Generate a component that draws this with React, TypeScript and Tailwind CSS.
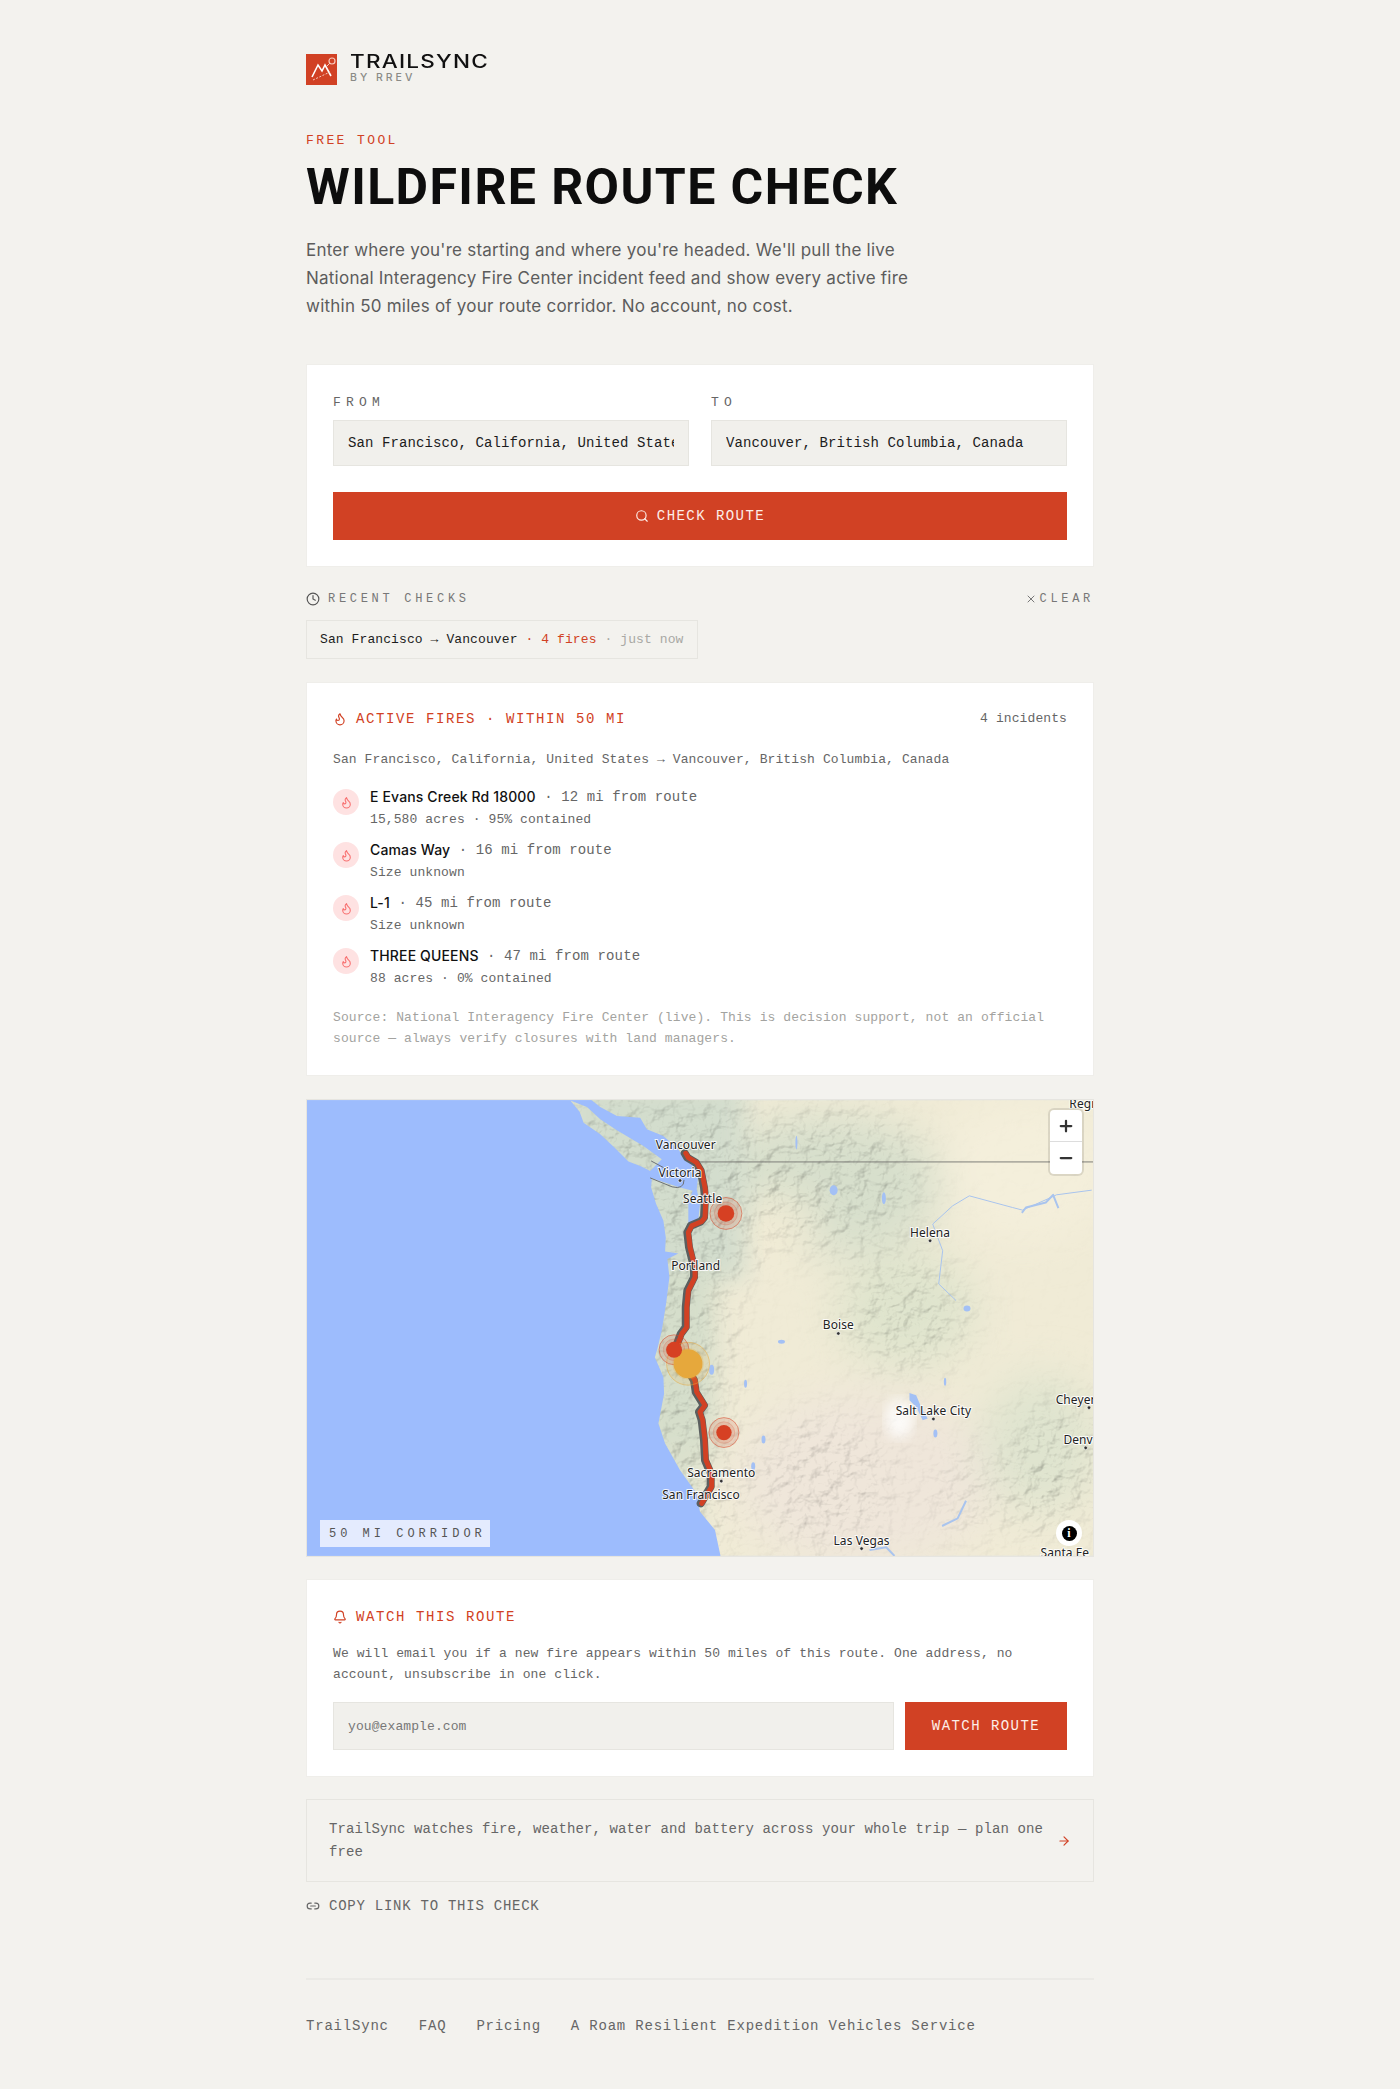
import { ArrowRight, Bell, Clock, Flame, Link2, Minus, Plus, Search, X } from "lucide-react";

const mono = "font-['Liberation_Mono',monospace] tracking-[0.1px]";
const z = (pts: number[][]) => pts.map(([x, y], i) => `${i ? "L" : "M"}${(x / 3 - 6).toFixed(1)} ${(y / 3 - 9).toFixed(1)}`).join(" ");
const zq = (x: number) => x / 3 + 294;
const zy = (y: number) => y / 3 - 9;
const z4 = (pts: number[][]) => pts.map(([x, y], i) => `${i ? "L" : "M"}${zq(x).toFixed(1)} ${zy(y).toFixed(1)}`).join(" ");

const mainland = [
  [865, 20], [900, 48], [950, 75], [1020, 80], [1040, 115], [1090, 135], [1130, 170], [1150, 195], [1175, 215], [1195, 250], [1190, 295], [1200, 340], [1195, 385], [1165, 400], [1165, 335], [1178, 300], [1140, 290], [1055, 262], [1053, 290], [1068, 340], [1090, 390], [1097, 440], [1095, 482], [1135, 488], [1102, 505], [1108, 560], [1098, 640], [1085, 720], [1072, 775], [1064, 800], [1090, 860], [1092, 910], [1075, 1000], [1095, 1060], [1140, 1140], [1190, 1210], [1200, 1265], [1245, 1320], [1262, 1400], [2700, 1400], [2700, 20],
];
const island = [[810, 28], [860, 48], [900, 85], [950, 118], [1030, 165], [1085, 205], [1050, 240], [1022, 226], [985, 212], [945, 172], [900, 130], [850, 95], [838, 62]];
const route = [[1157, 187], [1165, 200], [1190, 215], [1205, 240], [1215, 290], [1218, 320], [1215, 380], [1205, 392], [1175, 405], [1165, 425], [1170, 470], [1185, 530], [1185, 560], [1165, 600], [1160, 650], [1160, 710], [1145, 730], [1130, 770], [1150, 810], [1185, 870], [1190, 905], [1215, 945], [1200, 965], [1208, 990], [1215, 1050], [1218, 1110], [1235, 1150], [1235, 1190], [1205, 1240]];
const labels: [string, number, number][] = [
  ["Vancouver", 257, 161], ["Victoria", 240, 245], ["Seattle", 308, 326], ["Portland", 287, 527], ["Helena", 992, 426], ["Boise", 716, 705], ["Salt Lake City", 1002, 962], ["Cheyenne", 1455, 928], ["Denver", 1455, 1050], ["Sacramento", 364, 1149], ["San Francisco", 303, 1216], ["Las Vegas", 786, 1352], ["Santa Fe", 1397, 1390], ["Regina", 1470, 40],
];
const dots = [[240, 269], [992, 450], [716, 729], [1002, 986], [1470, 952], [1460, 1073], [364, 1173], [786, 1376]];
const lakes = [[702, 298, 4, 5], [853, 322, 2, 6], [1103, 654, 3.5, 3], [545, 754, 3.5, 2], [437, 880, 1.5, 4], [491, 1048, 2, 4], [460, 1128, 2, 4], [1008, 1030, 2, 4], [1037, 874, 1.2, 4], [335, 838, 2.5, 5], [590, 155, 1, 7]];

function RouteMap() {
  return (
    <svg viewBox="0 0 788 457" className="block w-full h-full">
      <defs>
        <clipPath id="land"><path d={z(mainland) + "Z " + z(island) + "Z"} /></clipPath>
        <filter id="relief" x="0" y="0" width="100%" height="100%">
          <feTurbulence type="fractalNoise" baseFrequency="0.07 0.08" numOctaves="5" seed="11" />
          <feDiffuseLighting surfaceScale="6" diffuseConstant="1.15" lightingColor="#fff"><feDistantLight azimuth="225" elevation="62" /></feDiffuseLighting>
        </filter>
        <filter id="b30"><feGaussianBlur stdDeviation="22" /></filter>
        <filter id="b14"><feGaussianBlur stdDeviation="12" /></filter>
        <filter id="b6"><feGaussianBlur stdDeviation="6" /></filter>
        <mask id="reliefMask" maskUnits="userSpaceOnUse" x="0" y="0" width="788" height="457">
          <rect width="788" height="457" fill="#0c0c0c" />
          <g filter="url(#b30)" fill="#fff">
            <rect x="260" y="0" width="190" height="170" />
            <rect x="340" y="170" width="85" height="287" />
            <ellipse cx="530" cy="80" rx="90" ry="70" />
            <ellipse cx="600" cy="215" rx="60" ry="55" />
            <ellipse cx="520" cy="385" rx="70" ry="70" fillOpacity="0.8" />
            <ellipse cx="660" cy="395" rx="40" ry="50" fillOpacity="0.6" />
            <ellipse cx="750" cy="370" rx="50" ry="70" />
          </g>
        </mask>
      </defs>
      <rect width="788" height="457" fill="#9dbcfd" />
      <g clipPath="url(#land)">
        <rect width="788" height="457" fill="#f0ebd6" />
        <g filter="url(#b30)">
          <ellipse cx="560" cy="380" rx="130" ry="90" fill="#efe6da" />
          <ellipse cx="520" cy="85" rx="120" ry="70" fill="#d7dfcc" />
          <ellipse cx="600" cy="210" rx="70" ry="60" fill="#dfe4cd" />
          <ellipse cx="735" cy="345" rx="60" ry="70" fill="#dfe4cf" />
          <ellipse cx="465" cy="125" rx="45" ry="30" fill="#f2ecd6" />
          <ellipse cx="720" cy="70" rx="90" ry="70" fill="#f4efdb" />
        </g>
        <g filter="url(#b14)">
          <rect x="260" y="-20" width="180" height="200" fill="#d3ddcd" />
          <rect x="335" y="170" width="75" height="190" fill="#d5decb" />
          <rect x="345" y="340" width="50" height="100" fill="#dbe1cd" />
        </g>
        <ellipse cx={zq(900)} cy={zy(985)} rx="14" ry="20" fill="#fff" opacity="0.8" filter="url(#b6)" />
        <rect width="788" height="457" filter="url(#relief)" mask="url(#reliefMask)" className="mix-blend-multiply" opacity="0.4" />
      </g>
      <g fill="#a3c0f5">
        {lakes.map(([x, y, a, b], i) => <ellipse key={i} cx={zq(x)} cy={zy(y)} rx={a} ry={b} />)}
        <path d={z4([[930, 908], [950, 915], [965, 950], [985, 985], [970, 990], [950, 950], [930, 930]]) + "Z"} />
      </g>
      <g fill="none" stroke="#a9c4ee" strokeLinejoin="round">
        <path d={z4([[1478, 298], [1372, 312], [1360, 318], [1270, 358], [1240, 350], [1110, 315], [1060, 345], [1000, 400], [1030, 480], [1018, 580], [1070, 630]])} strokeWidth="1" />
        <path d={z4([[1268, 366], [1280, 350], [1340, 335], [1362, 312], [1378, 352]])} strokeWidth="2" />
        <path d={z4([[1100, 1232], [1075, 1285], [1028, 1308]])} strokeWidth="2" />
        <path d={z4([[810, 1380], [860, 1372], [885, 1398]])} strokeWidth="2" />
      </g>
      <path d="M391 62 H788" stroke="#7d7d78" strokeWidth="1" fill="none" />
      <path d="M344 78 L366 87 Q378 90 378 80 M345 61 L358 68" stroke="#6b6f74" strokeWidth="1" fill="none" />
      <path d={z(route)} transform="translate(-1 0)" fill="none" stroke="#5b5f5f" strokeWidth="8" strokeLinejoin="round" strokeLinecap="round" />
      <path d={z(route)} fill="none" stroke="#d14124" strokeWidth="5" strokeLinejoin="round" strokeLinecap="round" />
      <g>
        {[[264, 820, "#e9a93c", 21.5], [222, 778, "#d64023", 15], [378, 368, "#d64023", 16], [372, 1027, "#d64023", 15]].map(([x, y, c, r], i) => (
          <g key={i} fill={c as string} stroke={c as string}>
            <circle cx={zq(x as number)} cy={zy(y as number)} r={r as number} fillOpacity="0.14" strokeOpacity="0.5" strokeWidth="1" />
            <circle cx={zq(x as number)} cy={zy(y as number)} r={(r as number) * 0.72} fillOpacity="0.12" strokeOpacity="0.18" strokeWidth="1" />
          </g>
        ))}
        <circle cx={zq(264)} cy={zy(820)} r="14.5" fill="#e6a83c" />
        <circle cx={zq(222)} cy={zy(778)} r="8" fill="#d64023" />
        <circle cx={zq(378)} cy={zy(368)} r="8.3" fill="#d64023" />
        <circle cx={zq(372)} cy={zy(1027)} r="7.7" fill="#d64023" />
      </g>
      <g fill="#333">
        {dots.map(([x, y], i) => <circle key={i} cx={zq(x)} cy={zy(y)} r="1.8" stroke="#fff" strokeWidth="0.6" />)}
      </g>
      <g fontFamily="'Noto Sans', sans-serif" fontSize="12" fill="#222" textAnchor="middle" stroke="#fff" strokeWidth="2" strokeOpacity="0.85" paintOrder="stroke">
        {labels.map(([t, x, y]) => <text key={t} x={zq(x)} y={zy(y) + 4}>{t}</text>)}
      </g>
    </svg>
  );
}

function Row({ name, dist, meta }: { name: string; dist: string; meta: string }) {
  return (
    <div className="flex gap-[11px] h-[53px]">
      <div className="mt-[3px] w-[26px] h-[26px] rounded-full bg-[#fee2e2] flex items-center justify-center shrink-0">
        <Flame size={13} className="text-[#f87171]" />
      </div>
      <div>
        <div className="h-[22px] leading-[22px] flex items-center">
          <span className="font-['Inter',sans-serif] text-[14px] font-medium tracking-[0.14px] text-[#111]">{name}</span>
          <span className={`${mono} text-[14px] text-[#666] whitespace-pre`}> · {dist} mi from route</span>
        </div>
        <div className={`${mono} text-[13px] leading-[24px] text-[#666]`}>{meta}</div>
      </div>
    </div>
  );
}

export default function App() {
  return (
    <div className={`min-h-[2089px] bg-[#f3f2ee] ${mono}`}>
      <div className="mx-auto w-[788px] pt-[54px]">
        <header className="flex items-start gap-[13px] h-[32px]">
          <svg width="31" height="31" viewBox="0 0 31 31" className="shrink-0">
            <rect width="31" height="31" fill="#d14124" />
            <path d="M6 23 L12 11 L16 17 L19 11 L25 22" fill="none" stroke="#fff" strokeWidth="1.6" />
            <path d="M7 26 L24 18" stroke="#f6c8bb" strokeWidth="1" strokeDasharray="2 1.5" />
            <circle cx="26" cy="7" r="3" fill="none" stroke="#f6c8bb" strokeWidth="1.2" />
            <path d="M21 12 L24 9" stroke="#f6c8bb" strokeWidth="1" />
          </svg>
          <div>
            <div className="font-['Inter',sans-serif] font-medium text-[18px] leading-[15px] tracking-[1px] text-[#111] mt-[-1px] pt-[1px] origin-left scale-x-[1.25] whitespace-nowrap">TRAILSYNC</div>
            <div className="font-['Inter',sans-serif] font-medium text-[10.5px] leading-[11px] tracking-[3px] text-[#8a8a86] mt-[3px]">BY RREV</div>
          </div>
        </header>

        <p className="mt-[47px] text-[13px] leading-[16px] tracking-[2.4px] text-[#d14124]">FREE TOOL</p>
        <h1 className="mt-[9px] font-['Roboto',sans-serif] font-bold text-[50px] leading-[58px] tracking-[1.4px] text-[#0d0d0d] whitespace-nowrap">WILDFIRE ROUTE CHECK</h1>
        <p className="mt-[20px] font-['Inter',sans-serif] text-[17px] leading-[28px] tracking-[0.23px] text-[#5c5c5c] w-[620px]">
          Enter where you're starting and where you're headed. We'll pull the live National Interagency Fire Center incident feed and show every active fire within 50 miles of your route corridor. No account, no cost.
        </p>

        <section className="mt-[44px] h-[203px] bg-white border border-[#efeeea] px-[26px] pt-[29px]">
          <div className="grid grid-cols-2 gap-[22px]">
            <label className="block">
              <span className="block text-[13px] leading-[18px] tracking-[5.2px] text-[#666]">FROM</span>
              <input readOnly value="San Francisco, California, United States" className={`${mono} mt-[8px] w-full h-[46px] bg-[#f1f0ec] border border-[#e6e5e0] px-[14px] text-[14px] text-[#1c1c1c] outline-none`} />
            </label>
            <label className="block">
              <span className="block text-[13px] leading-[18px] tracking-[5.2px] text-[#666]">TO</span>
              <input readOnly value="Vancouver, British Columbia, Canada" className={`${mono} mt-[8px] w-full h-[46px] bg-[#f1f0ec] border border-[#e6e5e0] px-[14px] text-[14px] text-[#1c1c1c] outline-none`} />
            </label>
          </div>
          <button className="mt-[26px] w-full h-[48px] bg-[#d14124] text-[14px] tracking-[1.45px] text-[#fdeee9] flex items-center justify-center gap-[8px]">
            <Search size={14} /> CHECK ROUTE
          </button>
        </section>

        <div className="mt-[24px] h-[16px] flex items-center justify-between text-[12px] tracking-[3.7px] text-[#777]">
          <span className="flex items-center gap-[8px]"><Clock size={14} className="text-[#555]" />RECENT CHECKS</span>
          <span className="flex items-center gap-[2px]"><X size={12} />CLEAR</span>
        </div>
        <div className="mt-[13px] w-[392px] h-[39px] border border-[#e6e5e0] flex items-center px-[13px] text-[13px] whitespace-pre">
          <span className="text-[#1c1c1c]">San Francisco → Vancouver</span>
          <span className="text-[#d14124]"> · 4 fires</span>
          <span className="text-[#a8a8a4]"> · just now</span>
        </div>

        <section className="mt-[23px] h-[394px] bg-white border border-[#efeeea] px-[26px] pt-[27px]">
          <div className="flex items-center justify-between h-[18px]">
            <span className="flex items-center gap-[9px] text-[14px] tracking-[1.6px] text-[#d14124]"><Flame size={14} />ACTIVE FIRES · WITHIN 50 MI</span>
            <span className="text-[13px] text-[#666]">4 incidents</span>
          </div>
          <p className="mt-[23px] h-[18px] text-[13px] leading-[18px] text-[#666] whitespace-nowrap">San Francisco, California, United States → Vancouver, British Columbia, Canada</p>
          <div className="mt-[17px]">
            <Row name="E Evans Creek Rd 18000" dist="12" meta="15,580 acres · 95% contained" />
            <Row name="Camas Way" dist="16" meta="Size unknown" />
            <Row name="L-1" dist="45" meta="Size unknown" />
            <Row name="THREE QUEENS" dist="47" meta="88 acres · 0% contained" />
          </div>
          <p className="mt-[9px] text-[13px] leading-[21px] text-[#a3a3a0]">Source: National Interagency Fire Center (live). This is decision support, not an official source — always verify closures with land managers.</p>
        </section>

        <section className="relative mt-[23px] h-[458px] border border-[#e6e5e0] overflow-hidden">
          <RouteMap />
          <div className="absolute left-[743px] top-[10px] w-[32px] h-[64px] bg-white rounded-[4px] shadow-[0_0_0_2px_rgba(0,0,0,0.1)] flex flex-col text-[#333]">
            <div className="h-[32px] border-b border-[#ddd] flex items-center justify-center"><Plus size={18} strokeWidth={3} /></div>
            <div className="h-[32px] flex items-center justify-center"><Minus size={18} strokeWidth={3} /></div>
          </div>
          <div className="absolute left-[749px] top-[420px] w-[26px] h-[26px] rounded-full bg-white flex items-center justify-center">
            <span className="w-[15px] h-[15px] rounded-full bg-black text-white flex items-center justify-center font-['Liberation_Serif',serif] font-bold text-[12px] leading-none">i</span>
          </div>
          <div className="absolute left-[13px] top-[420px] w-[170px] h-[27px] bg-[#e4ebfe] flex items-center pl-[9px] text-[12px] tracking-[4px] text-[#555] whitespace-nowrap">50 MI CORRIDOR</div>
        </section>

        <section className="mt-[22px] h-[198px] bg-white border border-[#efeeea] px-[26px] pt-[28px]">
          <div className="flex items-center gap-[9px] h-[18px] text-[14px] tracking-[1.6px] text-[#d14124]"><Bell size={14} />WATCH THIS ROUTE</div>
          <p className="mt-[17px] text-[13px] leading-[21px] text-[#666]">We will email you if a new fire appears within 50 miles of this route. One address, no account, unsubscribe in one click.</p>
          <div className="mt-[17px] flex gap-[11px]">
            <input readOnly placeholder="you@example.com" className={`${mono} flex-1 min-w-0 h-[48px] bg-[#f1f0ec] border border-[#e6e5e0] px-[14px] text-[13px] placeholder:text-[#777] outline-none`} />
            <button className="w-[162px] h-[48px] bg-[#d14124] text-[14px] tracking-[1.45px] text-[#fdeee9]">WATCH ROUTE</button>
          </div>
        </section>

        <a className="mt-[22px] h-[83px] border border-[#e6e5e0] flex items-center justify-between pl-[22px] pr-[22px] text-[14px] leading-[23px] text-[#666]">
          <span className="w-[725px]">TrailSync watches fire, weather, water and battery across your whole trip — plan one free</span>
          <ArrowRight size={14} className="text-[#d14124] shrink-0" />
        </a>

        <div className="mt-[15px] h-[18px] flex items-center gap-[9px] text-[14px] tracking-[0.75px] text-[#666]"><Link2 size={14} />COPY LINK TO THIS CHECK</div>

        <footer className="mt-[63px] border-t-2 border-[#ebeae6] pt-[36px] flex gap-[30px] text-[14px] leading-[20px] tracking-[0.8px] text-[#666]">
          <span>TrailSync</span><span>FAQ</span><span>Pricing</span><span>A Roam Resilient Expedition Vehicles Service</span>
        </footer>
      </div>
    </div>
  );
}
